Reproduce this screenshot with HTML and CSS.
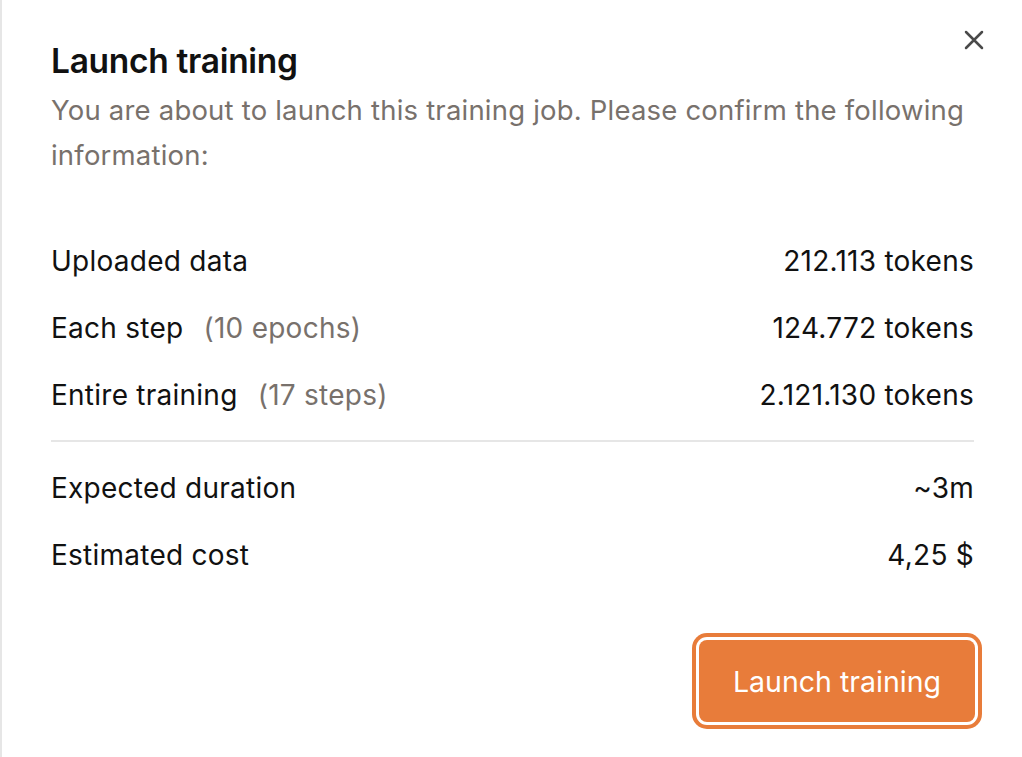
FILE: index.html
```html
<!DOCTYPE html>
<html>
<head>
<meta charset="utf-8">
<link rel="stylesheet" href="styles.css">
</head>
<body>
<div class="modal">
  <button class="close" aria-label="Close">
    <svg width="20" height="20" viewBox="0 0 20 20"><path d="M2 2L18 18M18 2L2 18" stroke="#4a4a4a" stroke-width="2.5" stroke-linecap="round"/></svg>
  </button>
  <h1 class="title">Launch training</h1>
  <p class="desc">You are about to launch this training job. Please confirm the following information:</p>
  <div class="rows">
    <div class="row"><span>Uploaded data</span><span>212.113 tokens</span></div>
    <div class="row"><span>Each step <span class="muted">(10 epochs)</span></span><span>124.772 tokens</span></div>
    <div class="row"><span>Entire training <span class="muted">(17 steps)</span></span><span>2.121.130 tokens</span></div>
  </div>
  <hr class="divider">
  <div class="rows rows2">
    <div class="row"><span>Expected duration</span><span>~3m</span></div>
    <div class="row"><span>Estimated cost</span><span>4,25 $</span></div>
  </div>
  <div class="actions">
    <button class="launch">Launch training</button>
  </div>
</div>
</body>
</html>
```
FILE: styles.css
```css
html, body {
  margin: 0;
  padding: 0;
  background: #fff;
}
body {
  font-family: Inter, "Noto Sans", sans-serif;
  color: #111;
}
.modal {
  position: relative;
  box-sizing: border-box;
  width: 1022px;
  height: 757px;
  border-left: 2px solid #e6e6e6;
  padding: 38px 48px 0 49px;
}
.close {
  position: absolute;
  top: 30px;
  right: 38px;
  border: 0;
  background: none;
  padding: 0;
  width: 20px;
  height: 20px;
  cursor: pointer;
}
.close svg { display: block; }
.title {
  margin: 0;
  font-size: 33.5px;
  font-weight: 600;
  letter-spacing: -0.3px;
  line-height: 46px;
  color: #111;
}
.desc {
  margin: 4px 0 0;
  font-size: 27.5px;
  letter-spacing: 0.2px;
  line-height: 45px;
  color: #78716c;
  max-width: 925px;
}
.rows {
  margin-top: 65px;
  display: flex;
  flex-direction: column;
  gap: 31px;
}
.rows2 { margin-top: 28px; }
.row {
  display: flex;
  justify-content: space-between;
  font-size: 28px;
  letter-spacing: 0.25px;
  line-height: 36px;
  color: #111;
}
.muted {
  color: #78716c;
  margin-left: 12px;
}
.divider {
  border: 0;
  height: 2px;
  background: #e6e6e6;
  margin: 27px 0 0;
}
.actions {
  display: flex;
  justify-content: flex-end;
  margin-top: 60px;
  margin-right: -8px;
}
.launch {
  font-family: inherit;
  font-size: 28.5px;
  color: #fff;
  background: #e87c3a;
  border: 0;
  border-radius: 8px;
  width: 276px;
  height: 82px;
  margin: 7px;
  box-shadow: 0 0 0 3px #fff, 0 0 0 7px #e87c3a;
  cursor: pointer;
}
```
